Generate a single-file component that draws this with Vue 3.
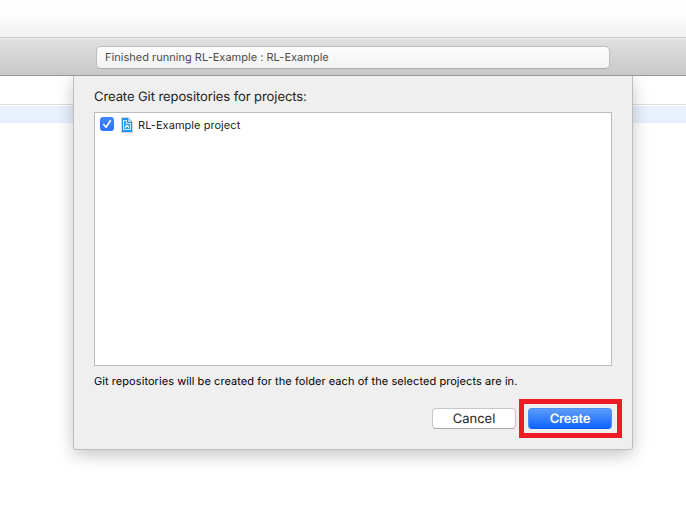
<script setup>
import { ref } from 'vue'

const status = 'Finished running RL-Example : RL-Example'
const projects = ref([{ name: 'RL-Example project', checked: true }])
</script>

<template>
  <div class="window">
    <div class="titlebar"></div>
    <div class="toolbar">
      <div class="status"><span class="status-text">{{ status }}</span></div>
    </div>
    <div class="editor">
      <div class="tab-row"></div>
      <div class="selected-row"></div>
      <div class="sheet-clip">
        <section class="sheet">
          <h1 class="heading"><span>Create Git repositories for projects:</span></h1>
          <div class="list">
            <div v-for="p in projects" :key="p.name" class="row" @click="p.checked = !p.checked">
              <span class="check" :class="{ on: p.checked }">
                <svg v-if="p.checked" width="14" height="14" viewBox="0 0 14 14">
                  <path d="M3.7 7.5 6.1 10.2 10.4 3.7" fill="none" stroke="#fff" stroke-width="1.6" stroke-linecap="round" stroke-linejoin="round" />
                </svg>
              </span>
              <svg class="file" width="12" height="16" viewBox="0 0 12 16">
                <path d="M0 0H7.5L12 4.5V16H0Z" fill="#c9d3d9" />
                <path d="M1 1H7L11 5V15H1Z" fill="#1f97ee" />
                <path d="M7 1V5H11Z" fill="#9bd6f7" />
                <path d="M2 3H6V6H10V13H2Z" fill="#c9ebfd" />
                <path d="M3 4H5V7H9V12H3Z" fill="#2fa4f3" />
                <path d="M4 11V9.5L5.3 8H6.7L8 9.5V11H7V10H5V11Z" fill="#e6f6ff" />
              </svg>
              <span class="project-name">{{ p.name }}</span>
            </div>
          </div>
          <p class="note"><span>Git repositories will be created for the folder each of the selected projects are in.</span></p>
          <footer class="actions">
            <button class="button cancel">Cancel</button>
            <div class="highlight">
              <button class="button create">Create</button>
            </div>
          </footer>
        </section>
      </div>
    </div>
  </div>
</template>

<style>
body {
  margin: 0;
  background: #fff;
}
</style>

<style scoped>
* {
  box-sizing: border-box;
}
.window {
  width: 686px;
  height: 506px;
  display: flex;
  flex-direction: column;
  overflow: hidden;
  background: #fff;
  font-family: Inter, "Liberation Sans", sans-serif;
  text-rendering: geometricPrecision;
  color: #222;
}
.titlebar {
  height: 38px;
  flex: none;
  background: linear-gradient(#fff, #fdfdfd 40%, #f1f1f1);
  border-bottom: 1px solid #c6c6c6;
}
.toolbar {
  height: 38px;
  flex: none;
  display: flex;
  align-items: flex-start;
  padding: 7px 76px 0 96px;
  background: linear-gradient(#e0e0e0, #c8c8c8);
  border-top: 1px solid #f0f0f0;
  border-bottom: 1px solid #999;
}
.status {
  flex: 1;
  height: 23px;
  padding-left: 8px;
  border: 1px solid #bdbdbd;
  border-bottom-color: #aaa;
  border-radius: 5px;
  background: linear-gradient(#fdfdfd, #f2f2f2);
  font-size: 11px;
  line-height: 21px;
  color: #4b4b4b;
  white-space: nowrap;
}
.status-text {
  letter-spacing: 0.02px;
}
.editor {
  position: relative;
  flex: 1;
}
.tab-row {
  height: 29px;
  border-bottom: 1px solid #dedede;
}
.selected-row {
  margin-top: 1px;
  height: 17px;
  background: #e9f1fe;
}
.sheet-clip {
  position: absolute;
  inset: 0;
  overflow: hidden;
  display: flex;
  justify-content: flex-start;
  align-items: flex-start;
  padding-left: 74px;
}
.sheet {
  width: 558px;
  height: 373px;
  padding: 12px 20px 0;
  display: flex;
  flex-direction: column;
  background: #efefef;
  border-radius: 0 0 2px 2px;
  box-shadow: 0 0 0 1px #bdbdbd, 0 5px 18px rgba(0, 0, 0, 0.25);
}
.heading {
  margin: 0;
  height: 24px;
  font-size: 13px;
  font-weight: 400;
  line-height: 18px;
  letter-spacing: -0.08px;
  white-space: nowrap;
}
.list {
  height: 254px;
  flex: none;
  padding: 4px 5px;
  border: 1px solid #bcbcbc;
  background: #fff;
}
.row {
  display: flex;
  align-items: center;
  height: 16px;
  font-size: 11px;
  line-height: 16px;
}
.check {
  width: 14px;
  height: 14px;
  margin-top: -2px;
  border: 1px solid #b5b5b5;
  border-radius: 3px;
}
.check.on {
  border: 0;
  background: linear-gradient(#4187fa, #2f73f6);
}
.check svg {
  display: block;
}
.file {
  margin-left: 7px;
}
.project-name {
  margin-left: 5px;
  letter-spacing: 0.05px;
}
.note {
  margin: 7px 0 0;
  height: 16px;
  font-size: 11px;
  line-height: 16px;
  letter-spacing: 0.064px;
  color: #000;
  white-space: nowrap;
}
.actions {
  display: flex;
  justify-content: flex-end;
  align-items: center;
  gap: 3px;
  margin: 10px -10px 0 0;
  height: 39px;
}
.highlight {
  width: 103px;
  height: 39px;
  padding: 4px 5px 0 4px;
  border: 5px solid #ed1c24;
}
.button {
  display: block;
  width: 84px;
  height: 21px;
  padding: 1px 0 0;
  border-radius: 4px;
  font: 13px/18px Inter, "Liberation Sans", sans-serif;
  text-rendering: geometricPrecision;
  text-align: center;
}
.cancel {
  border: 1px solid #c6c6c6;
  border-bottom-color: #a9a9a9;
  background: #fff;
  color: #222;
}
.create {
  border: 1px solid #4a8df7;
  border-bottom-color: #0c5df0;
  background: linear-gradient(#5c9cf9, #0f64fb);
  color: #fff;
  font-weight: 600;
  letter-spacing: -0.2px;
}
</style>
